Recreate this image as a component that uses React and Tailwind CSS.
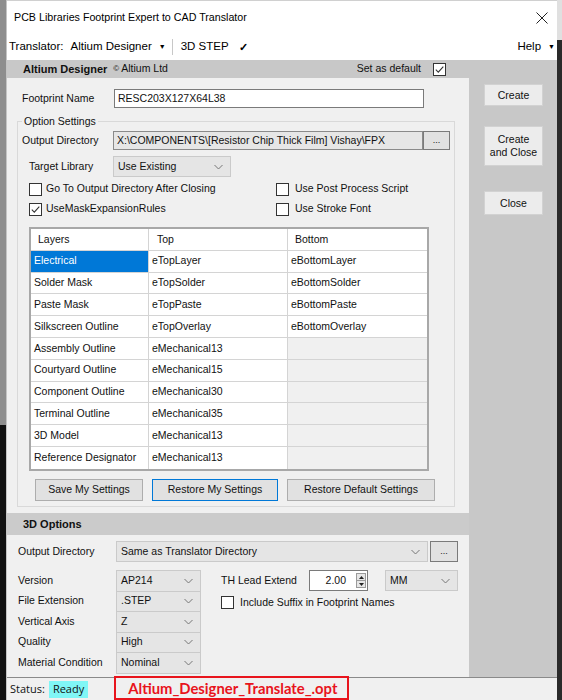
import React from 'react'

const rows = [
  ['Electrical', 'eTopLayer', 'eBottomLayer'],
  ['Solder Mask', 'eTopSolder', 'eBottomSolder'],
  ['Paste Mask', 'eTopPaste', 'eBottomPaste'],
  ['Silkscreen Outline', 'eTopOverlay', 'eBottomOverlay'],
  ['Assembly Outline', 'eMechanical13', null],
  ['Courtyard Outline', 'eMechanical15', null],
  ['Component Outline', 'eMechanical30', null],
  ['Terminal Outline', 'eMechanical35', null],
  ['3D Model', 'eMechanical13', null],
  ['Reference Designator', 'eMechanical13', null],
]

const stepRows = [
  ['Version', 'AP214'],
  ['File Extension', '.STEP'],
  ['Vertical Axis', 'Z'],
  ['Quality', 'High'],
  ['Material Condition', 'Nominal'],
]

function Check({ checked }) {
  return (
    <span className="flex h-[13px] w-[13px] shrink-0 items-center justify-center border border-[#333] bg-white">
      {checked && (
        <svg width="11" height="11" viewBox="0 0 11 11">
          <path d="M1.8 5.6 4.3 8.1 9.3 2.6" fill="none" stroke="#333" strokeWidth="1.1" />
        </svg>
      )}
    </span>
  )
}

function Chevron() {
  return (
    <svg width="9" height="6" viewBox="0 0 9 6">
      <path d="M0.5 1 4.5 5 8.5 1" fill="none" stroke="#777" strokeWidth="1" />
    </svg>
  )
}

function Select({ value, className = '' }) {
  return (
    <div className={`flex items-center justify-between border border-[#cacaca] bg-[#e5e5e5] pl-[4px] pr-[7px] ${className}`}>
      <span>{value}</span>
      <Chevron />
    </div>
  )
}

function Btn({ children, className = '' }) {
  return (
    <div className={`flex items-center justify-center border border-[#adadad] bg-[#e1e1e1] text-center leading-[13px] ${className}`}>
      {children}
    </div>
  )
}

export default function App() {
  return (
    <div className="flex h-[700px] w-[562px] overflow-hidden bg-[#f0f0f0] font-['Liberation_Sans',Arial,sans-serif] text-[10.5px] text-[#111]">
      {/* outside the window */}
      <div className="flex w-[6px] flex-col">
        <div className="h-[425px] bg-[#8e8e8e]" />
        <div className="flex-1 bg-[#111]" />
      </div>

      <div className="flex w-[551px] flex-col border-l border-[#c4c4c4]">
        {/* title */}
        <div className="flex h-[34px] items-center justify-between border-t border-[#d0d0d0] bg-white pl-[7px] pr-[9px] text-[10.7px] text-black">
          <span>PCB Libraries Footprint Expert to CAD Translator</span>
          <svg width="12" height="12" viewBox="0 0 12 12">
            <path d="M0.5 0.5 11.5 11.5 M11.5 0.5 0.5 11.5" stroke="#222" strokeWidth="1" />
          </svg>
        </div>

        {/* menu */}
        <div className="flex h-[26px] items-center bg-white pl-[2px] pr-[2px] text-[11.5px] text-black">
          <span>Translator:</span>
          <span className="ml-[7px]">Altium Designer</span>
          <span className="ml-[7px] text-[7px]">▼</span>
          <span className="ml-[6px] h-[16px] w-px bg-[#c8c8c8]" />
          <span className="ml-[8px]">3D STEP</span>
          <span className="ml-[10px] text-[11px] font-bold">✓</span>
          <span className="ml-auto">Help</span>
          <span className="ml-[7px] text-[7px]">▼</span>
        </div>

        <div className="flex h-[617px]">
          {/* left column */}
          <div className="flex w-[462px] flex-col">
            <div className="flex h-[18px] items-center bg-[#c8c8c8] pl-[16px]">
              <span className="text-[11px] font-bold">Altium Designer</span>
              <span className="ml-[6px] text-[8px]">©</span>
              <span className="ml-[2px]">Altium Ltd</span>
              <span className="ml-auto">Set as default</span>
              <span className="ml-[12px] mr-[23px]">
                <Check checked />
              </span>
            </div>

            {/* upper panel */}
            <div className="flex h-[435px] flex-col bg-[#f0f0f0]">
              <div className="mt-[11px] flex items-center pl-[15px]">
                <span className="w-[92px]">Footprint Name</span>
                <div className="flex h-[19px] w-[310px] items-center border border-[#7a7a7a] bg-white pl-[3px]">
                  RESC203X127X64L38
                </div>
              </div>

              <fieldset className="ml-[10px] mt-[7px] w-[438px] border border-[#d9d9d9] pb-[5px]">
                <legend className="ml-[4px] px-[2px] leading-[13px]">Option Settings</legend>

                <div className="mt-[3px] flex items-center pl-[4px]">
                  <span className="w-[91px]">Output Directory</span>
                  <div className="flex h-[19px] w-[310px] items-center border border-[#8a8a8a] bg-[#e6e6e6] pl-[3px]">
                    X:\COMPONENTS\[Resistor Chip Thick Film] Vishay\FPX
                  </div>
                  <div className="flex h-[19px] w-[27px] items-center justify-center border border-[#7a7a7a] bg-[#e1e1e1] text-[9px]">
                    ...
                  </div>
                </div>

                <div className="mt-[6px] flex items-center pl-[11px]">
                  <span className="w-[84px]">Target Library</span>
                  <Select value="Use Existing" className="h-[21px] w-[118px]" />
                </div>

                <div className="mt-[2px] flex flex-col pl-[11px]">
                  <div className="flex h-[20px] items-center">
                    <div className="flex w-[247px] items-center gap-[4px]">
                      <Check />
                      <span>Go To Output Directory After Closing</span>
                    </div>
                    <div className="flex items-center gap-[6px]">
                      <Check />
                      <span>Use Post Process Script</span>
                    </div>
                  </div>
                  <div className="flex h-[20px] items-center">
                    <div className="flex w-[247px] items-center gap-[4px]">
                      <Check checked />
                      <span>UseMaskExpansionRules</span>
                    </div>
                    <div className="flex items-center gap-[6px]">
                      <Check />
                      <span>Use Stroke Font</span>
                    </div>
                  </div>
                </div>

                {/* layer table */}
                <div className="ml-[11px] mt-[8px] w-[400px] border-2 border-[#a8a8a8] bg-white">
                  <div className="grid h-[21.8px] grid-cols-[118px_139px_1fr] border-b border-[#d4d4d4]">
                    <div className="flex items-center border-r border-[#d4d4d4] pl-[7px]">Layers</div>
                    <div className="flex items-center border-r border-[#d4d4d4] pl-[8px]">Top</div>
                    <div className="flex items-center pl-[7px]">Bottom</div>
                  </div>
                  {rows.map((r, i) => (
                    <div
                      key={r[0]}
                      className={`grid h-[21.8px] grid-cols-[118px_139px_1fr] ${i < rows.length - 1 ? 'border-b border-[#d4d4d4]' : ''}`}
                    >
                      <div className={`flex items-center border-r border-[#d4d4d4] pl-[3px] ${i === 0 ? 'bg-[#0078d7] text-white' : ''}`}>
                        {r[0]}
                      </div>
                      <div className="flex items-center border-r border-[#d4d4d4] pl-[3px]">{r[1]}</div>
                      <div className={`flex items-center pl-[3px] ${r[2] ? '' : 'bg-[#f0f0f0]'}`}>{r[2]}</div>
                    </div>
                  ))}
                </div>

                <div className="ml-[17px] mt-[8px] flex gap-[9px]">
                  <Btn className="h-[22px] w-[108px]">Save My Settings</Btn>
                  <Btn className="h-[22px] w-[126px] !border-[#0078d7]">Restore My Settings</Btn>
                  <Btn className="h-[22px] w-[148px]">Restore Default Settings</Btn>
                </div>
              </fieldset>
            </div>

            <div className="flex h-[22px] items-center bg-[#cbcbcb] pl-[16px]">
              <span className="text-[11px] font-bold">3D Options</span>
            </div>

            {/* lower panel */}
            <div className="flex flex-1 flex-col bg-[#f0f0f0] pl-[11px]">
              <div className="mt-[6px] flex items-center">
                <span className="w-[98px]">Output Directory</span>
                <Select value="Same as Translator Directory" className="h-[21px] w-[312px]" />
                <div className="ml-[2px] flex h-[21px] w-[28px] items-center justify-center border border-[#7a7a7a] bg-[#e1e1e1] text-[9px]">
                  ...
                </div>
              </div>

              <div className="mt-[8px] flex">
                <div className="flex flex-col">
                  {stepRows.map((r, i) => (
                    <div key={r[0]} className={`flex items-center ${i > 0 ? '-mt-px' : ''}`}>
                      <span className="w-[98px]">{r[0]}</span>
                      <Select value={r[1]} className="h-[21.5px] w-[85px]" />
                    </div>
                  ))}
                </div>

                <div className="ml-[20px] flex flex-col">
                  <div className="flex items-center">
                    <span className="w-[88px]">TH Lead Extend</span>
                    <div className="flex h-[21px] w-[59px] items-center justify-end border border-[#7a7a7a] bg-white pr-[1px]">
                      <span className="mr-[10px]">2.00</span>
                      <div className="flex h-[15px] w-[10px] flex-col border border-[#9a9a9a] bg-[#e6e6e6]">
                        <div className="flex flex-1 items-center justify-center border-b border-[#9a9a9a]">
                          <svg width="5" height="3" viewBox="0 0 5 3"><path d="M0 3 2.5 0 5 3Z" fill="#222" /></svg>
                        </div>
                        <div className="flex flex-1 items-center justify-center">
                          <svg width="5" height="3" viewBox="0 0 5 3"><path d="M0 0 2.5 3 5 0Z" fill="#222" /></svg>
                        </div>
                      </div>
                    </div>
                    <Select value="MM" className="ml-[17px] h-[21px] w-[73px]" />
                  </div>
                  <div className="mt-[4px] flex items-center gap-[6px]">
                    <Check />
                    <span>Include Suffix in Footprint Names</span>
                  </div>
                </div>
              </div>
            </div>
          </div>

          {/* right column */}
          <div className="flex flex-1 flex-col items-start bg-[#c8c8c8] pl-[15px]">
            <Btn className="mt-[24px] h-[22px] w-[59px] !border-[#d2d2d2] !bg-[#ececec]">Create</Btn>
            <Btn className="mt-[20px] h-[40px] w-[59px] !border-[#d2d2d2] !bg-[#ececec]">
              Create
              <br />
              and Close
            </Btn>
            <Btn className="mt-[25px] h-[24px] w-[59px] !border-[#d2d2d2] !bg-[#ececec]">Close</Btn>
          </div>
        </div>

        {/* status bar */}
        <div className="flex h-[23px] items-center border-t border-[#8a8a8a] bg-[#f0f0f0] pl-[3px] font-['Open_Sans',sans-serif] text-[11px]">
          <span>Status:</span>
          <span className="ml-[4px] flex h-[17px] items-center bg-[#80f6f6] px-[4px]">Ready</span>
          <div className="-mt-[2px] ml-[26px] flex h-[24px] w-[235px] items-center border-2 border-[#e8141c] pl-[12px] font-['Lato',sans-serif] text-[14.8px] font-bold text-[#e8141c]">
            Altium_Designer_Translate_.opt
          </div>
        </div>
      </div>

      <div className="flex w-[5px] flex-col">
        <div className="h-[40px] bg-[#e0e0e0]" />
        <div className="flex-1 bg-[#2a2a2a]" />
      </div>
    </div>
  )
}
